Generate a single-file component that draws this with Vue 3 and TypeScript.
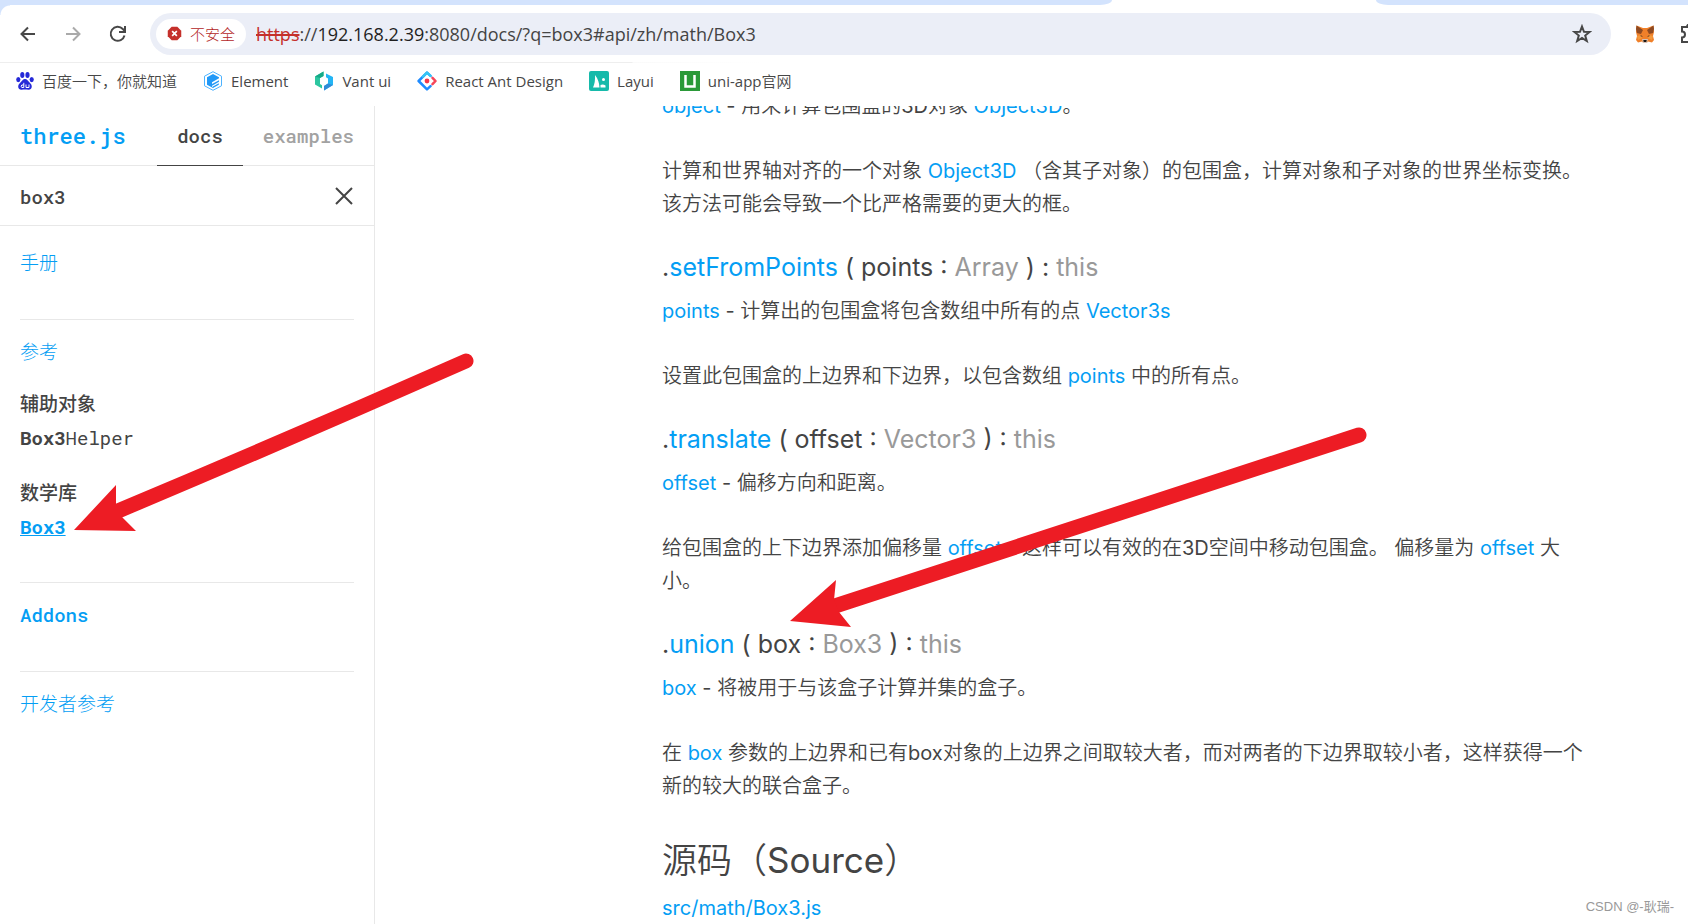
<script setup lang="ts">
import { ref } from 'vue'

interface Bookmark {
  id: string
  label: string
}

const bookmarks: Bookmark[] = [
  { id: 'baidu', label: '百度一下，你就知道' },
  { id: 'element', label: 'Element' },
  { id: 'vant', label: 'Vant ui' },
  { id: 'antd', label: 'React Ant Design' },
  { id: 'layui', label: 'Layui' },
  { id: 'uniapp', label: 'uni-app官网' },
]

const query = ref('box3')
</script>

<template>
  <div class="window">
    <header class="chrome">
      <div class="tabs">
        <div class="strip strip-left"></div>
        <div class="active-tab"></div>
        <div class="strip strip-right"></div>
      </div>

      <div class="toolbar">
        <button class="nav" aria-label="后退">
          <svg viewBox="0 0 20 20"><path d="M17 10H4M10 3.500L3.500 10L10 16.500" /></svg>
        </button>
        <button class="nav dim" aria-label="前进">
          <svg viewBox="0 0 20 20"><path d="M3 10H16M10 3.500L16.500 10L10 16.500" /></svg>
        </button>
        <button class="nav" aria-label="刷新">
          <svg viewBox="0 0 20 20"><path d="M16.500 11.500A7 7 0 1 1 14.800 5L16.800 7M17 2V8H11" /></svg>
        </button>

        <div class="omnibox">
          <button class="unsafe">
            <svg viewBox="0 0 16 16">
              <path d="M5 .8H11L15.200 5V11L11 15.200H5L.8 11V5Z" fill="#c5302b" />
              <path d="M5.500 5.500L10.500 10.500M10.500 5.500L5.500 10.500" stroke="#fff" stroke-width="1.800" />
            </svg>
            <span>不安全</span>
          </button>
          <div class="url"><s>https</s>://<span class="host">192.168.2.39</span>:8080/docs/?q=box3#api/zh/math/Box3</div>
          <button class="star" aria-label="收藏">
            <svg viewBox="0 0 20 20"><path d="M10 2.500L12 7.800L17.600 8L13.200 11.500L14.800 17L10 13.900L5.200 17L6.800 11.500L2.400 8L8 7.800Z" /></svg>
          </button>
        </div>

        <button class="ext" aria-label="MetaMask">
          <svg viewBox="0 0 20 20">
            <path d="M1.500 1.500L8 4H12L18.500 1.500L19 8L18 12L19 16L17 18.500L13 17.500L11.500 19H8.500L7 17.500L3 18.500L1 16L2 12L1 8Z" fill="#f0802a" />
            <path d="M1.500 1.500L8 6L6 10L2 9L1 5ZM18.500 1.500L12 6L14 10L18 9L19 5Z" fill="#8f4a22" />
            <path d="M2 12L6 11L7 14L3 16ZM18 12L14 11L13 14L17 16Z" fill="#f59a3c" />
            <path d="M5.500 11L8 12.500H5.800ZM14.500 11L12 12.500H14.200Z" fill="#54331f" />
            <path d="M7 15H13L12 19H8Z" fill="#d6c0b3" />
            <path d="M8.300 16H11.700L11.300 18H8.700Z" fill="#1c1714" />
          </svg>
        </button>
        <button class="puzzle" aria-label="扩展程序">
          <svg viewBox="0 0 20 20"><path d="M7 3A1 1 0 0 1 12 3H17V8A2.500 2.500 0 0 1 17 13V18H2V13.500A3 3 0 0 0 2 7.500V3Z" /></svg>
        </button>
      </div>

      <nav class="bookmarks" aria-label="书签">
        <a v-for="b in bookmarks" :key="b.id" href="#">
          <svg v-if="b.id === 'baidu'" class="small" viewBox="0 0 18 18" fill="#2529d8">
            <ellipse cx="6.300" cy="3" rx="2.100" ry="2.900" />
            <ellipse cx="11.500" cy="3" rx="2.100" ry="2.900" />
            <ellipse cx="2.300" cy="7.600" rx="2.100" ry="2.600" />
            <ellipse cx="15.700" cy="7.600" rx="2.100" ry="2.600" />
            <path d="M9 7C11 7 12 9 14 11C17 13.500 16 18 12.500 17.800C10 17.500 8 17.500 5.500 17.800C2 18 1 13.500 4 11C6 9 7 7 9 7Z" />
            <path d="M7.800 10.800V15.500H5.800Q4.500 14.300 5.800 13H7.800M10 12.500V15.500H13V12.500" fill="none" stroke="#fff" />
          </svg>
          <svg v-else-if="b.id === 'element'" viewBox="0 0 20 20">
            <path d="M10 .7L18.500 5.200V14.800L10 19.300L1.500 14.800V5.200Z" fill="#fff" stroke="#4db3ff" />
            <path d="M10 3L16 6.300V7.300L9 11.300V13L16 9.200V10.700L9 14.700V16L15.800 12.200V13.700L10 17L4 13.700V6.300Z" fill="#2299f7" />
          </svg>
          <svg v-else-if="b.id === 'vant'" viewBox="0 0 20 20">
            <path d="M9.500 .5V5L6 7V13L8 14.200V17.500L1 13.500V5.500Z" fill="#2cc6a0" />
            <path d="M9.500 .5V5L6 7L1 5.500Z" fill="#17a987" />
            <path d="M12 2.500L19 6V14L10 19.500V15L14 12.500V7.500L12 6.200Z" fill="#23b5f5" />
            <path d="M10 15L14 12.500L19 14L10 19.500Z" fill="#328bd6" />
          </svg>
          <svg v-else-if="b.id === 'antd'" viewBox="0 0 20 20" fill="none" stroke-width="2.500" stroke-linejoin="round" stroke-linecap="round">
            <path d="M13.500 4.800L10 1.600L1.600 10L10 18.400L13.500 15.200" stroke="#1f8bff" />
            <path d="M13.500 4.800L10 1.600L6 5.600" stroke="#35c5f5" />
            <path d="M15.500 6.800L18.500 10L15.500 13.200" stroke="#f5465a" />
            <circle cx="10" cy="10" r="2.400" fill="#f5374a" />
          </svg>
          <svg v-else-if="b.id === 'layui'" viewBox="0 0 20 20">
            <rect width="20" height="20" rx="2" fill="#16baaa" />
            <path d="M4 16.500Q6.500 11 6 4Q10 9 10.500 16.500ZM11.500 14Q14 13 16.500 14.500V16.500H11.500Z" fill="#fff" />
            <circle cx="14.500" cy="8.500" r="1.500" fill="#fff" />
          </svg>
          <svg v-else viewBox="0 0 20 20">
            <rect width="20" height="20" fill="#2b9939" />
            <path d="M5.500 4V15.500H14.500V4" fill="none" stroke="#fff" stroke-width="2.500" />
          </svg>
          <span>{{ b.label }}</span>
        </a>
      </nav>
    </header>

    <div class="page">
      <aside class="sidebar">
        <div class="head">
          <h1><a href="#">three.js</a></h1>
          <nav class="sections">
            <a class="current" href="#">docs</a>
            <a href="#">examples</a>
          </nav>
        </div>
        <div class="search">
          <input v-model="query" type="text" aria-label="搜索" />
          <button aria-label="清除" @click="query = ''">
            <svg viewBox="0 0 20 20"><path d="M2 2L18 18M18 2L2 18" /></svg>
          </button>
        </div>
        <div class="index">
          <section><h2>手册</h2></section>
          <section class="results">
            <h2>参考</h2>
            <h3>辅助对象</h3>
            <a href="#"><b>Box3</b>Helper</a>
            <h3>数学库</h3>
            <a class="selected" href="#"><b>Box3</b></a>
          </section>
          <section><h2 class="latin">Addons</h2></section>
          <section><h2>开发者参考</h2></section>
        </div>
      </aside>

      <main class="content">
        <p><a href="#">object</a> - 用来计算包围盒的3D对象 <a href="#">Object3D</a>。</p>
        <p>计算和世界轴对齐的一个对象 <a href="#">Object3D</a> （含其子对象）的包围盒，计算对象和子对象的世界坐标变换。<br />该方法可能会导致一个比严格需要的更大的框。</p>

        <h3>.<a href="#">setFromPoints</a> ( points : <i>Array</i> ) : <i>this</i></h3>
        <p><a href="#">points</a> - 计算出的包围盒将包含数组中所有的点 <a href="#">Vector3s</a></p>
        <p>设置此包围盒的上边界和下边界，以包含数组 <a href="#">points</a> 中的所有点。</p>

        <h3>.<a href="#">translate</a> ( offset : <i>Vector3</i> ) : <i>this</i></h3>
        <p><a href="#">offset</a> - 偏移方向和距离。</p>
        <p>给包围盒的上下边界添加偏移量 <a href="#">offset</a>，这样可以有效的在3D空间中移动包围盒。 偏移量为 <a href="#">offset</a> 大小。</p>

        <h3>.<a href="#">union</a> ( box : <i>Box3</i> ) : <i>this</i></h3>
        <p><a href="#">box</a> - 将被用于与该盒子计算并集的盒子。</p>
        <p>在 <a href="#">box</a> 参数的上边界和已有box对象的上边界之间取较大者，而对两者的下边界取较小者，这样获得一个新的较大的联合盒子。</p>

        <h2>源码（Source）</h2>
        <p><a href="#">src/math/Box3.js</a></p>
      </main>
    </div>

    <svg class="arrows" width="1688" height="924" viewBox="0 0 1688 924" aria-hidden="true">
      <path d="M466 361Q294 437 118 511" />
      <path d="M1359 435Q1098 521 835 606" />
      <polygon points="74,530 116,485 116,505 122,517 136,531" />
      <polygon points="790,621 836,580 834,600 839,612 851,627" />
    </svg>
    <span class="watermark">CSDN @-耿瑞-</span>
  </div>
</template>

<style>
html,
body {
  margin: 0;
  background: #fff;
}
</style>

<style scoped>
.window {
  position: relative;
  display: flex;
  flex-direction: column;
  height: 100vh;
  overflow: hidden;
  color: #444;
  background: #fff;
}

.window * {
  box-sizing: border-box;
}

a {
  color: #049ef4;
  text-decoration: none;
}

button {
  display: flex;
  align-items: center;
  justify-content: center;
  padding: 0;
  border: 0;
  background: none;
}

svg {
  display: block;
  flex: none;
}

.chrome {
  flex: none;
  height: 106px;
  font-family: "Open Sans", "Noto Sans CJK SC DemiLight", "Noto Sans CJK SC", sans-serif;
}

.tabs {
  display: flex;
  height: 5px;
}

.strip {
  background: #d3e3fd;
}

.strip-left {
  flex: 1112;
  border-bottom-right-radius: 12px 5px;
}

.active-tab {
  flex: 264;
}

.strip-right {
  flex: 312;
  border-bottom-left-radius: 12px 5px;
}

.toolbar {
  display: flex;
  align-items: center;
  height: 57px;
  padding-left: 18px;
  overflow: hidden;
  background: radial-gradient(circle at 10px 10px, #fff 9px, #d3e3fd 10px) 0 0 / 10px 10px no-repeat;
}

.nav {
  width: 20px;
  margin-right: 25px;
}

.nav svg,
.star svg,
.puzzle svg {
  width: 20px;
  height: 20px;
  fill: none;
  stroke: #474747;
  stroke-width: 2;
}

.nav.dim svg {
  stroke: #aaa;
}

.nav:nth-child(3) {
  margin-right: 22px;
}

.omnibox {
  display: flex;
  flex: 1;
  align-items: center;
  height: 42px;
  padding: 0 19px 0 6px;
  border-radius: 21px;
  background: #ebeef7;
}

.unsafe {
  gap: 8px;
  width: 90px;
  height: 30px;
  border-radius: 15px;
  background: #fff;
  color: #b3261e;
  font: 300 15px/30px "Noto Sans CJK SC", sans-serif;
}

.unsafe svg {
  width: 15px;
  height: 15px;
}

.url {
  flex: 1;
  margin-left: 10px;
  font-size: 18px;
  line-height: 24px;
  white-space: nowrap;
}

.url s {
  color: #c5302b;
  text-decoration-thickness: 2px;
}

.host {
  color: #1f1f1f;
}

.ext {
  margin-left: 24px;
}

.ext svg {
  width: 20px;
  height: 20px;
}

.puzzle {
  width: 8px;
  margin-left: 25px;
  overflow: hidden;
  justify-content: flex-start;
}

.bookmarks {
  display: flex;
  align-items: center;
  gap: 26px;
  height: 37px;
  padding-left: 16px;
  background: linear-gradient(90deg, #eee 632px, #fafafa 633px, #fff 762px) 0 0 / 100% 1px no-repeat;
}

.bookmarks a {
  display: flex;
  align-items: center;
  gap: 8px;
  color: #474747;
  font-size: 15px;
  line-height: 24px;
  white-space: nowrap;
}

.bookmarks svg {
  width: 20px;
  height: 20px;
}

.bookmarks svg.small {
  width: 18px;
  height: 18px;
}

.page {
  display: flex;
  flex: 1;
  min-height: 0;
  overflow: hidden;
}

.sidebar {
  flex: none;
  width: 375px;
  border-right: 1px solid #e8e8e8;
  font-family: "Roboto Mono", "DejaVu Sans Mono", "Noto Sans CJK SC", monospace;
  font-size: 19px;
}

.head {
  display: flex;
  align-items: stretch;
  justify-content: space-between;
  height: 60px;
  padding: 0 20px;
  border-bottom: 1px solid #e8e8e8;
}

.head h1 {
  margin: 0;
  font-size: 22px;
  font-weight: 500;
  line-height: 60px;
}

.sections {
  display: flex;
}

.sections a {
  height: 60px;
  color: #a2a2a2;
  font-size: 19px;
  font-weight: 500;
  line-height: 60px;
}

.sections .current {
  margin-right: 20px;
  padding: 0 20px;
  border-bottom: 1px solid #444;
  color: #444;
}

.search {
  display: flex;
  align-items: center;
  height: 60px;
  padding: 0 20px;
  border-bottom: 1px solid #e8e8e8;
}

.search input {
  flex: 1;
  min-width: 0;
  padding: 2px 0 0;
  border: 0;
  outline: 0;
  color: #444;
  font: inherit;
  font-weight: 500;
}

.search svg {
  width: 20px;
  height: 20px;
  stroke: #444;
  stroke-width: 2;
}

.index {
  padding: 5px 20px 0;
}

.index section {
  padding: 16px 0 40px;
}

.index section + section {
  border-top: 1px solid #e8e8e8;
}

.index .results {
  padding-bottom: 38px;
}

.index h2,
.index h3 {
  margin: 0;
  font-size: 19px;
  font-weight: 300;
  line-height: 32px;
}

.index h2 {
  color: #049ef4;
}

.index h2.latin {
  font-weight: 500;
}

.index h3 {
  margin: 20px 0 1px;
  font-weight: 500;
}

.index a + h3 {
  margin-top: 22px;
}

.index a {
  display: block;
  color: #444;
  line-height: 34px;
}

.index .selected {
  color: #049ef4;
  text-decoration: underline;
}

.content {
  flex: 1;
  min-width: 0;
  margin-top: -16px;
  padding: 0 96px 0 287px;
  font-family: Inter, "Noto Sans CJK SC DemiLight", "Noto Sans CJK SC Light", "Noto Sans CJK SC", sans-serif;
  font-size: 20px;
  font-weight: 400;
  line-height: 33px;
}

.content p {
  margin: 0 0 32px;
}

.content h3 {
  margin: 0 0 14px;
  font-size: 25px;
  font-weight: 400;
  line-height: 28px;
}

.content h2 {
  margin: 37px 0 12px;
  font-size: 35px;
  font-weight: 400;
  line-height: 40px;
}

.content i {
  color: #999;
  font-style: normal;
}

.arrows {
  position: absolute;
  top: 0;
  left: 0;
  pointer-events: none;
  fill: #ed1c24;
}

.arrows path {
  fill: none;
  stroke: #ed1c24;
  stroke-width: 15;
  stroke-linecap: round;
}

.watermark {
  position: absolute;
  right: 14px;
  bottom: 6px;
  color: #999;
  font: 13px/22px "Liberation Sans", "Noto Sans CJK SC", sans-serif;
}
</style>
